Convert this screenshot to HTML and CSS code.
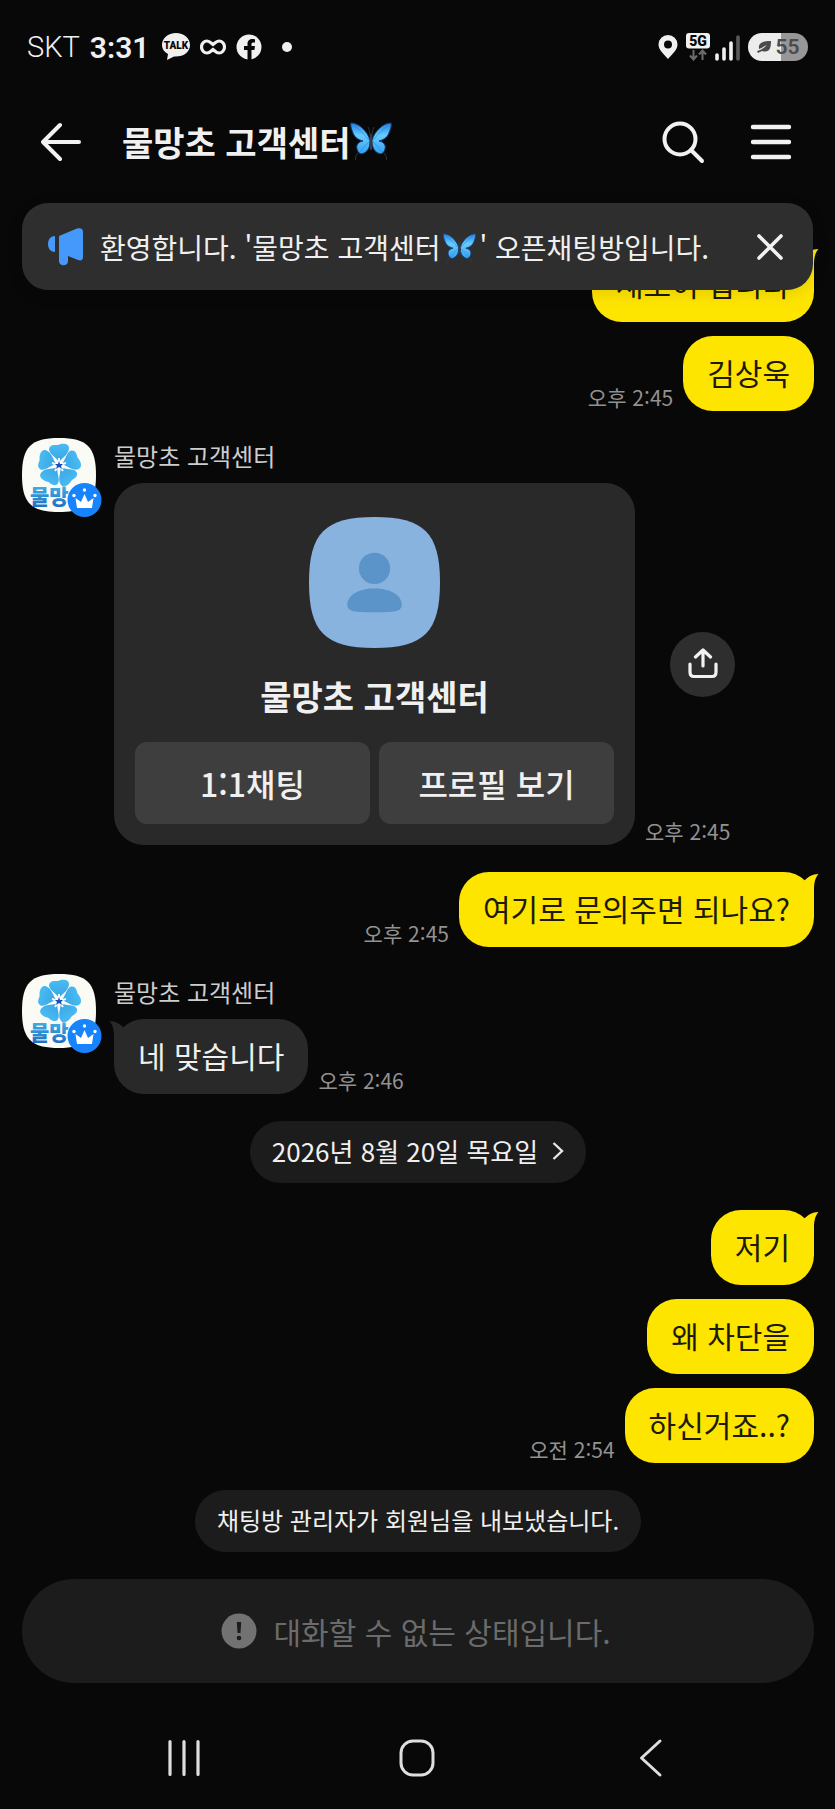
FILE: index.html
```html
<!DOCTYPE html>
<html lang="ko">
<head>
<meta charset="utf-8">
<meta name="viewport" content="width=device-width, initial-scale=1">
<title>물망초 고객센터</title>
<link rel="stylesheet" href="styles.css">
</head>
<body>
<svg class="defs" width="0" height="0" aria-hidden="true">
  <defs>
    <linearGradient id="wing" x1="0" y1="0" x2="0" y2="1"><stop offset="0" stop-color="#1f7fe6"/><stop offset=".4" stop-color="#66ccfd"/><stop offset="1" stop-color="#35a2f4"/></linearGradient>
    <linearGradient id="petal" x1="0" y1="-20" x2="0" y2="20" gradientUnits="userSpaceOnUse"><stop offset="0" stop-color="#48baf0"/><stop offset="1" stop-color="#2489dc"/></linearGradient>
    <linearGradient id="word" x1="0" y1="0" x2="0" y2="1"><stop offset="0" stop-color="#4cc0ee"/><stop offset="1" stop-color="#1766c0"/></linearGradient>
    <clipPath id="squircle"><path d="M37 0C65 0 74 9 74 37S65 74 37 74 0 65 0 37 9 0 37 0Z"/></clipPath>
  </defs>
  <symbol id="butterfly" viewBox="0 0 42 40">
    <g id="half">
      <path d="M20 18C17 9 9 1 1 1 0 4 2 8 3 11 5 16 9 18 13 19 8 20 6 23 7 27 8 31 11 33 14 31 18 29 20 25 20 19Z" fill="url(#wing)" stroke="#1b3c70" stroke-width="1"/>
      <path d="M19 18C14 12 9 7 4 4M19 20C15 23 12 27 10 30" fill="none" stroke="#2d86da" stroke-width=".7"/>
      <path d="M8 31Q5 34 5.500 38M20 13Q20 8 18 5" fill="none" stroke="#3c3c3c" stroke-width=".8"/>
    </g>
    <use href="#half" transform="matrix(-1 0 0 1 42 0)"/>
    <path d="M21 13V27" stroke="#333b48" stroke-width="2.400" stroke-linecap="round"/>
  </symbol>
  <symbol id="tail" viewBox="0 0 17 32"><path d="M2 9C6 5 10 2 16.500 2C13 6 12 11 12 18V32L0 32Z" fill="currentColor"/></symbol>
  <symbol id="avatar" viewBox="0 0 80 80">
    <g clip-path="url(#squircle)">
      <rect width="74" height="74" fill="#fbfbf6"/>
      <g transform="translate(37 27)">
        <path id="p" d="M0-3C-3-8-10-11-10-16-9-21-4-20-1-20 3-22 10-22 10-17 10-11 4-8 0-3Z" fill="url(#petal)"/>
        <use href="#p" transform="rotate(72)"/><use href="#p" transform="rotate(144)"/><use href="#p" transform="rotate(216)"/><use href="#p" transform="rotate(288)"/>
        <path d="M0 0V-7M0 0L7-2M0 0L4 6M0 0L-4 6M0 0L-7-2" stroke="#f3fbff" stroke-width="2"/>
        <path d="M0-4L1-1 4-1 2 1 3 4 0 2-3 4-2 1-4-1-1-1Z" fill="#1c50b8"/>
      </g>
    </g>
    <text class="avatar-word" x="8" y="66" fill="url(#word)">물망</text>
    <circle cx="62.500" cy="62" r="17" fill="#1783fc"/>
    <path d="M55 70L53.500 60 59 64 62.500 56 66 64 71.500 60 70 70Z" fill="#fff"/>
    <g fill="#fff"><circle cx="52" cy="57.500" r="1.700"/><circle cx="62.500" cy="52" r="1.700"/><circle cx="73" cy="57.500" r="1.700"/></g>
  </symbol>
</svg>

<div class="phone">
  <div class="status">
    <div class="status-left">
      <span class="carrier">SKT</span>
      <time class="clock">3:31</time>
      <svg width="28" height="28" viewBox="0 0 28 28" aria-hidden="true"><path d="M14 0C6 0 0 5 0 12 0 16 2 19 6 21L5 27 12 23.500C22 24 28 19 28 12 28 5 22 0 14 0Z" fill="#f0f0f0"/><text class="talk-word" x="14" y="15.500" text-anchor="middle">TALK</text></svg>
      <svg width="26" height="16" viewBox="0 0 26 16" aria-hidden="true"><path d="M13 5.500C10.500 3.500 9.500 2 7 2A5.500 6 0 0 0 7 14C9.500 14 10.500 12.500 13 10.500 15.500 12.500 16.500 14 19 14A5.500 6 0 0 0 19 2C16.500 2 15.500 3.500 13 5.500Z" fill="none" stroke="#f0f0f0" stroke-width="3.200"/></svg>
      <svg width="26" height="26" viewBox="0 0 26 26" aria-hidden="true"><circle cx="13" cy="13" r="12.500" fill="#f0f0f0"/><path d="M11.500 26V16H8V12H11.500V10C11.500 6.500 13.500 5 16.500 5L19 5.200V8.500H17.300C15.700 8.500 15.500 9.300 15.500 10.500V12H19L18.400 16H15.500V26Z" fill="#080808"/></svg>
      <span class="dot"></span>
    </div>
    <div class="status-right">
      <svg width="20" height="26" viewBox="0 0 20 26" aria-hidden="true"><path fill-rule="evenodd" d="M10 1A9.500 9.500 0 0 0 .500 10.500C.500 16 6 20 10 25 14 20 19.500 16 19.500 10.500A9.500 9.500 0 0 0 10 1ZM10 6.500A4 4 0 1 1 10 14.500 4 4 0 0 1 10 6.500Z" fill="#f0f0f0"/></svg>
      <svg width="54" height="28" viewBox="0 0 54 28" aria-hidden="true"><rect width="24" height="15.500" rx="3" fill="#f0f0f0"/><text class="net-word" x="12" y="12.800" text-anchor="middle">5G</text><path d="M7.500 17V26M4 22.500L7.500 26.500 11 22.500M16.500 27V18M13 21.500L16.500 17.500 20 21.500" fill="none" stroke="#6c6c6c" stroke-width="2"/><g stroke-width="3.600" stroke-linecap="round" stroke="#f0f0f0"><path d="M31 22V26M38 16V26M45 10V26"/><path d="M52 4V26" stroke="#5a5a5a"/></g></svg>
      <span class="battery"><svg width="15" height="12" viewBox="0 0 15 12" aria-hidden="true"><path d="M14 0C5 0 1 2 2 8C5 7 7 5 10 4C7 7 4 9 0 10L1 12 5 10C12 12 14 8 14 0Z" fill="#4b4b4b"/></svg>55</span>
    </div>
  </div>

  <header class="header">
    <button class="icon-btn" aria-label="뒤로"><svg width="40" height="40" viewBox="0 0 40 40"><path d="M38 20H2M19 3L2 20 19 37" fill="none" stroke="#f2f2f2" stroke-width="4" stroke-linecap="round" stroke-linejoin="round"/></svg></button>
    <h1 class="title">물망초 고객센터<svg class="title-fly" role="img" aria-label="나비"><use href="#butterfly"/></svg></h1>
    <button class="icon-btn" aria-label="검색"><svg width="44" height="44" viewBox="0 0 44 44"><circle cx="19" cy="19" r="15.500" fill="none" stroke="#f2f2f2" stroke-width="4"/><path d="M30 30L41 41" stroke="#f2f2f2" stroke-width="4" stroke-linecap="round"/></svg></button>
    <button class="icon-btn" aria-label="메뉴"><svg width="42" height="36" viewBox="0 0 42 36"><path d="M3 3H39M3 18H39M3 33H39" stroke="#f2f2f2" stroke-width="4.400" stroke-linecap="round"/></svg></button>
  </header>

  <main class="chat">
    <aside class="notice">
      <svg width="36" height="38" viewBox="0 0 36 38" aria-hidden="true"><path d="M7 8V24C3 24 0 21 0 16S3 8 7 8ZM11 8L29 .500C33-.500 35 1 35 4V29C35 32 33 33 30 32L20 28V33C20 39 11 38.500 11 33Z" fill="#4499fb"/></svg>
      <p class="notice-text">환영합니다. '물망초 고객센터<svg class="notice-fly" role="img" aria-label="나비"><use href="#butterfly"/></svg>' 오픈채팅방입니다.</p>
      <button class="icon-btn" aria-label="닫기"><svg width="28" height="28" viewBox="0 0 28 28"><path d="M3 3L25 25M25 3L3 25" stroke="#f2f2f2" stroke-width="3.600" stroke-linecap="round"/></svg></button>
    </aside>

    <section class="group mine">
      <div class="row"><p class="bubble">새로이 입니다<svg class="tail" aria-hidden="true"><use href="#tail"/></svg></p></div>
      <div class="row"><time class="time">오후 2:45</time><p class="bubble">김상욱</p></div>
    </section>

    <section class="group theirs">
      <svg class="avatar" aria-hidden="true"><use href="#avatar"/></svg>
      <div class="body">
        <h2 class="name">물망초 고객센터</h2>
        <div class="row">
          <article class="card">
            <svg class="card-pic" viewBox="0 0 130 130" aria-hidden="true"><path d="M65 0C114 0 130 16 130 65S114 130 65 130 0 114 0 65 16 0 65 0Z" fill="#88b3de"/><circle cx="65" cy="51" r="15.500" fill="#5b94c9"/><path d="M65 71C83 71 92 79 92 87 92 94 84 94.500 65 94.500S38 94 38 87C38 79 47 71 65 71Z" fill="#5b94c9"/></svg>
            <h3 class="card-title">물망초 고객센터</h3>
            <div class="card-actions"><button class="card-btn">1:1채팅</button><button class="card-btn">프로필 보기</button></div>
          </article>
          <div class="card-side">
            <button class="share" aria-label="공유"><svg width="32" height="32" viewBox="0 0 32 32"><path d="M3 16V24Q3 28.500 7 28.500H25Q29 28.500 29 24V16M16 18V2M8.500 9L16 2 23.500 9" fill="none" stroke="#f2f2f2" stroke-width="3.200" stroke-linecap="round" stroke-linejoin="round"/></svg></button>
            <time class="time">오후 2:45</time>
          </div>
        </div>
      </div>
    </section>

    <section class="group mine">
      <div class="row"><time class="time">오후 2:45</time><p class="bubble">여기로 문의주면 되나요?<svg class="tail" aria-hidden="true"><use href="#tail"/></svg></p></div>
    </section>

    <section class="group theirs">
      <svg class="avatar" aria-hidden="true"><use href="#avatar"/></svg>
      <div class="body">
        <h2 class="name">물망초 고객센터</h2>
        <div class="row"><p class="bubble">네 맞습니다<svg class="tail" aria-hidden="true"><use href="#tail"/></svg></p><time class="time">오후 2:46</time></div>
      </div>
    </section>

    <button class="pill date">2026년 8월 20일 목요일<svg width="12" height="20" viewBox="0 0 12 20" aria-hidden="true"><path d="M1.500 2L10 10 1.500 18" fill="none" stroke="#e6e6e6" stroke-width="2.400"/></svg></button>

    <section class="group mine">
      <div class="row"><p class="bubble">저기<svg class="tail" aria-hidden="true"><use href="#tail"/></svg></p></div>
      <div class="row"><p class="bubble">왜 차단을</p></div>
      <div class="row"><time class="time">오전 2:54</time><p class="bubble">하신거죠..?</p></div>
    </section>

    <p class="pill">채팅방 관리자가 회원님을 내보냈습니다.</p>

    <form class="composer">
      <svg width="36" height="36" viewBox="0 0 36 36" aria-hidden="true"><circle cx="18" cy="18" r="17.500" fill="#727272"/><path d="M15.800 9H20.200L19.500 20H16.500Z" fill="#1c1c1c"/><circle cx="18" cy="25" r="2.300" fill="#1c1c1c"/></svg>
      <input class="composer-input" type="text" aria-label="메시지 입력" placeholder="대화할 수 없는 상태입니다." disabled>
    </form>
  </main>

  <nav class="navbar">
    <button class="icon-btn" aria-label="최근 앱"><svg width="36" height="40" viewBox="0 0 36 40"><path d="M4 3.500V36.500M18 3.500V36.500M32 3.500V36.500" stroke="#dedede" stroke-width="3.200" stroke-linecap="round"/></svg></button>
    <button class="icon-btn" aria-label="홈"><svg width="36" height="40" viewBox="0 0 36 40"><rect x="2" y="3" width="32" height="34" rx="12" fill="none" stroke="#dedede" stroke-width="3"/></svg></button>
    <button class="icon-btn" aria-label="이전"><svg width="24" height="40" viewBox="0 0 24 40"><path d="M21 3L2.500 20 21 37" fill="none" stroke="#dedede" stroke-width="3" stroke-linecap="round" stroke-linejoin="round"/></svg></button>
  </nav>
</div>
</body>
</html>
```

FILE: styles.css
```css
* { box-sizing: border-box; margin: 0; padding: 0; }
body {
  background: #080808;
  color: #f0f0f0;
  font-family: "Noto Sans CJK KR", sans-serif;
}
button { background: none; border: 0; color: inherit; font: inherit; }
svg { display: block; flex: none; }
.defs { position: absolute; }
.phone { display: flex; flex-direction: column; min-height: 100vh; }

.status {
  display: flex;
  justify-content: space-between;
  align-items: center;
  height: 94px;
  padding: 0 27px;
  font-family: Roboto, sans-serif;
}
.status-left, .status-right { display: flex; align-items: center; gap: 10px; }
.carrier { font-size: 29px; font-weight: 300; }
.clock { font-size: 30px; font-weight: 600; margin-right: 3px; }
.talk-word { font: 900 10px Roboto, sans-serif; fill: #080808; }
.net-word { font: 900 14px Roboto, sans-serif; fill: #080808; }
.avatar-word { font: 900 21px "Noto Sans CJK KR", sans-serif; }
.dot { width: 10px; height: 10px; margin-left: 10px; border-radius: 50%; background: #f0f0f0; }
.battery {
  display: flex;
  align-items: center;
  justify-content: center;
  gap: 4px;
  width: 60px;
  height: 28px;
  border-radius: 14px;
  background: linear-gradient(90deg, #ececec 55%, #979797 55%);
  color: #4b4b4b;
  font-size: 21px;
  font-weight: 600;
}
.status-right { gap: 8px; }

.header {
  display: flex;
  align-items: center;
  height: 96px;
  padding: 0 43px 0 41px;
  gap: 45px;
}
.title {
  display: flex;
  align-items: center;
  flex: 1;
  margin-left: -4px;
  font-size: 34px;
  line-height: 48px;
  font-weight: 700;
  white-space: nowrap;
}
.title-fly { width: 42px; height: 40px; }

.chat {
  position: relative;
  display: flex;
  flex-direction: column;
  gap: 27px;
  padding: 57px 21px 0 22px;
}
.notice {
  position: absolute;
  z-index: 1;
  top: 13px;
  left: 22px;
  right: 22px;
  display: flex;
  align-items: center;
  height: 87px;
  padding: 0 29px 0 26px;
  gap: 16px;
  border-radius: 26px;
  background: #2e2e2e;
  box-shadow: 0 4px 16px rgba(0, 0, 0, .1);
}
.notice-text { flex: 1; font-size: 28px; line-height: 40px; white-space: nowrap; }
.notice-fly { display: inline-block; width: 35px; height: 32px; margin: 0 2px; vertical-align: -6px; }

.group { display: flex; }
.mine { flex-direction: column; gap: 14px; }
.mine .row { justify-content: flex-end; }
.theirs { gap: 12px; }
.row { display: flex; align-items: flex-end; gap: 10px; }
.avatar { width: 80px; height: 80px; }
.body { flex: 1; min-width: 0; }
.name {
  height: 45px;
  color: #cdcdcd;
  font-size: 24px;
  line-height: 36px;
  font-weight: 400;
}
.bubble {
  position: relative;
  padding: 14px 24px 16px;
  border-radius: 30px;
  font-size: 30px;
  line-height: 45px;
  white-space: nowrap;
}
.mine .bubble { background: #fee500; color: #1d1a04; }
.theirs .bubble { background: #292929; }
.tail { position: absolute; top: 0; right: -5px; width: 17px; height: 32px; color: #fee500; }
.theirs .tail { right: auto; left: -5px; transform: scaleX(-1); color: #292929; }
.time { color: #929292; font-size: 21px; line-height: 28px; white-space: nowrap; }

.card {
  flex: 0 1 521px;
  display: flex;
  flex-direction: column;
  align-items: center;
  padding: 34px 21px 21px;
  border-radius: 30px;
  background: #292929;
}
.card-pic { width: 131px; height: 131px; }
.card-title { margin: 24px 0 22px; font-size: 34px; line-height: 48px; font-weight: 700; }
.card-actions { display: grid; grid-template-columns: 1fr 1fr; gap: 9px; width: 100%; }
.card-btn {
  height: 82px;
  border-radius: 12px;
  background: #3e3e3e;
  font-size: 32px;
  font-weight: 500;
}
.card-side {
  display: grid;
  grid-template-rows: 1fr auto 1fr;
  align-self: stretch;
  justify-items: start;
}
.card-side .share { grid-row: 2; margin-left: 25px; }
.card-side .time { grid-row: 3; align-self: end; }
.share {
  display: flex;
  align-items: center;
  justify-content: center;
  width: 65px;
  height: 65px;
  border-radius: 50%;
  background: #2e2e2e;
}

.pill {
  align-self: center;
  padding: 12px 22px 14px;
  border-radius: 31px;
  background: #1c1c1c;
  color: #f0f0f0;
  font-size: 24px;
  line-height: 36px;
}
.date { display: flex; align-items: center; gap: 14px; font-size: 26px; }

.composer {
  display: flex;
  align-items: center;
  justify-content: center;
  gap: 17px;
  height: 104px;
  border-radius: 52px;
  background: #1c1c1c;
}
.composer-input {
  width: 342px;
  border: 0;
  background: none;
  font: 400 30px/44px "Noto Sans CJK KR", sans-serif;
}
.composer-input::placeholder { color: #6b6b6b; opacity: 1; }

.navbar {
  display: grid;
  grid-template-columns: repeat(3, 1fr);
  flex: 1;
  align-items: center;
  justify-items: center;
  min-height: 96px;
  padding: 24px 8% 0;
}
```
